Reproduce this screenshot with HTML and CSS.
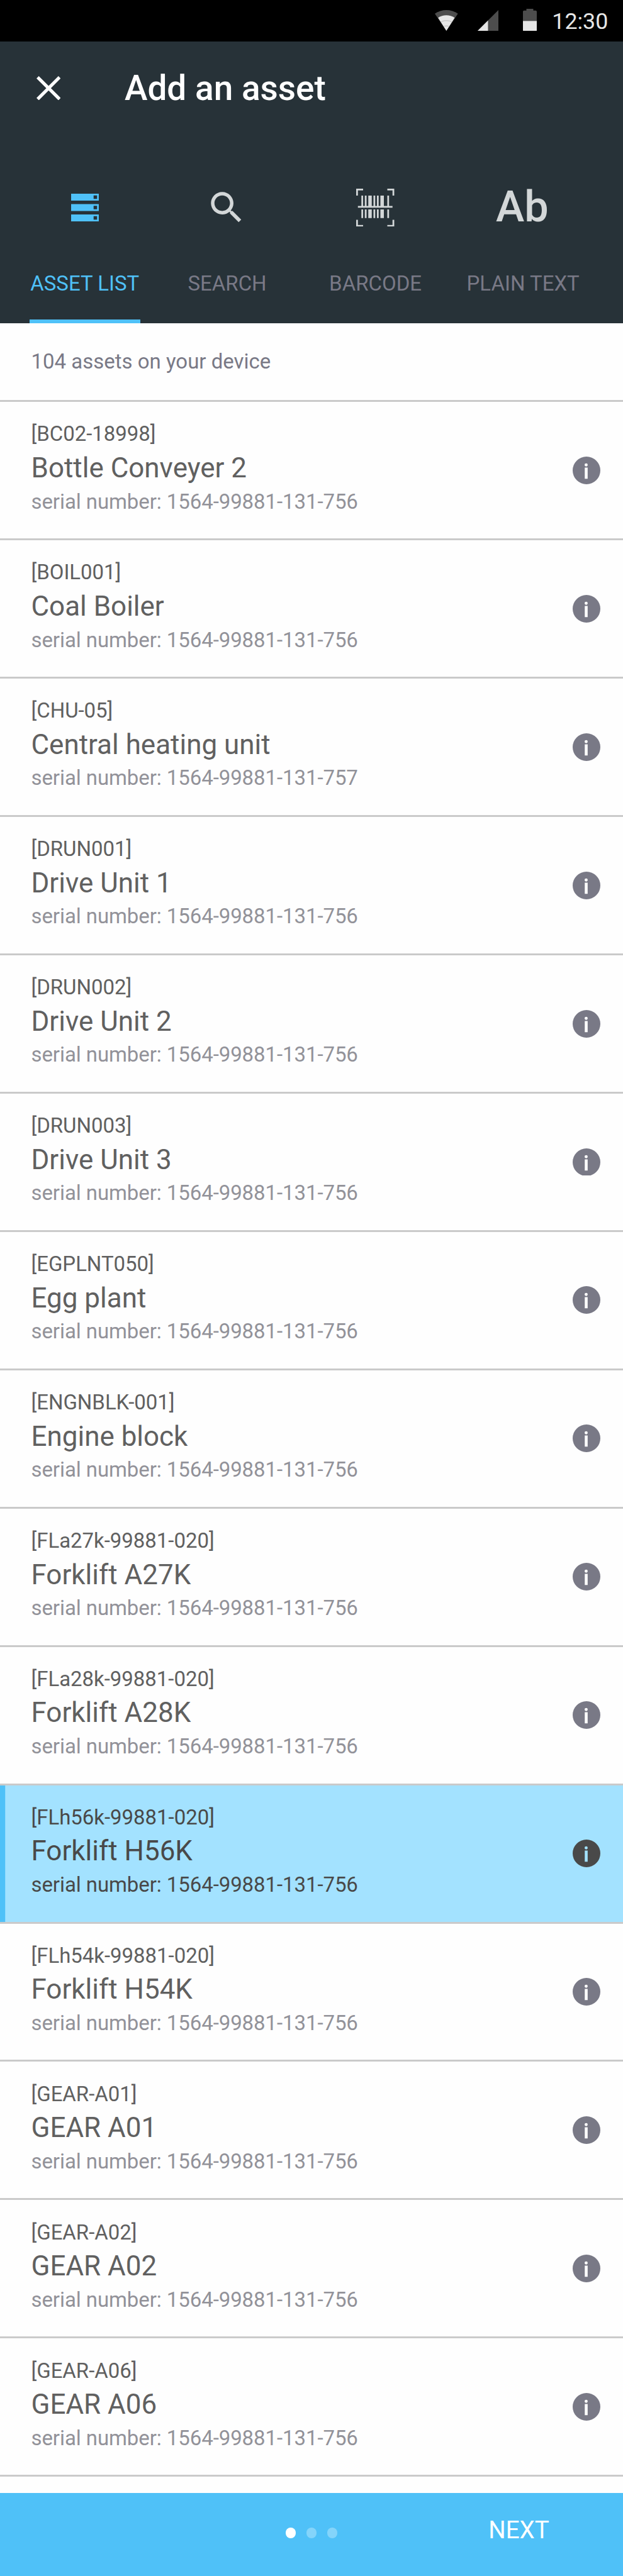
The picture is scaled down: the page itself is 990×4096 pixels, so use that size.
FILE: index.html
```html
<!DOCTYPE html>
<html lang="en">
<head>
<meta charset="utf-8">
<title>Add an asset</title>
<link rel="stylesheet" href="styles.css">
</head>
<body>
<svg class="sprite" aria-hidden="true">
  <symbol id="info" viewBox="0 0 48 48">
    <path fill="currentColor" fill-rule="evenodd" d="M24 0A24 24 0 1 1 24 48A24 24 0 1 1 24 0ZM23.400 11.700A2.700 2.700 0 1 0 23.400 17.100A2.700 2.700 0 1 0 23.400 11.700ZM21 19V38.500H26V19Z"/>
  </symbol>
</svg>
<div class="screen">
  <div class="status">
    <svg class="wifi" viewBox="0 0 40 36"><path d="M0 6.3C12-2.1 28-2.1 40 6.3L20 36Z" fill="#4d4d4d"/><path d="M5.6 13.3C14 7.6 26 7.6 34.4 13.3L20 36Z" fill="#e6e6e6"/><path d="M11 20.500Q14 18.500 17 18.500H23Q26 18.500 29 20.500M15.500 28.500Q17 27.500 20 27.500T24.500 28.500" fill="none" stroke="#b0b0b0" stroke-width=".9"/></svg>
    <svg class="signal" viewBox="0 0 36 36"><path d="M0 36L36 0V36Z" fill="#4d4d4d"/><path d="M0 36L18 18V36Z" fill="#e6e6e6"/></svg>
    <svg class="battery" viewBox="0 0 24 39"><path d="M6 0H18V3H22Q24 3 24 5V21H0V5Q0 3 2 3H6Z" fill="#4d4d4d"/><path d="M0 21H24V37Q24 39 22 39H2Q0 39 0 37Z" fill="#e6e6e6"/></svg>
    <span class="clock">12:30</span>
  </div>
  <header class="header">
    <div class="appbar">
      <svg class="close" viewBox="0 0 42 42"><path d="M2 2L40 40M40 2L2 40" stroke="#fff" stroke-width="5.600"/></svg>
      <h1 class="heading">Add an asset</h1>
    </div>
    <nav class="tabs">
      <a class="tab active">
        <span class="tab-icon"><svg class="i-list" viewBox="0 0 48 48"><path fill="#4fc1f8" fill-rule="evenodd" d="M0 0H48V12H0ZM39 3V9H45V3ZM0 18H48V30H0ZM39 21V27H45V21ZM0 36H48V48H0ZM39 39V45H45V39Z"/></svg></span>
        <span class="tab-label">ASSET LIST</span>
      </a>
      <a class="tab">
        <span class="tab-icon"><svg class="i-search" viewBox="0 0 24 24"><path fill="#d3d7d8" d="M15.500 14h-.79l-.28-.27C15.410 12.590 16 11.110 16 9.500 16 5.910 13.090 3 9.500 3S3 5.910 3 9.500 5.910 16 9.500 16c1.610 0 3.090-.59 4.230-1.570l.27.28v.79l5 4.990L20.490 19l-4.990-5zm-6 0C7.010 14 5 11.990 5 9.500S7.010 5 9.500 5 14 7.010 14 9.500 11.990 14 9.500 14z"/></svg></span>
        <span class="tab-label">SEARCH</span>
      </a>
      <a class="tab">
        <span class="tab-icon"><svg class="i-barcode" viewBox="0 0 66 66"><path fill="#d3d7d8" d="M0 0H12V3H3V12H0ZM54 0H66V12H63V3H54ZM0 54H3V63H12V66H0ZM63 54H66V66H54V63H63ZM3 30H63V33H3ZM9 12H12V30H9ZM15 12H18V30H15ZM21 12H27V30H21ZM30 12H33V30H30ZM36 12H39V30H36ZM42 12H48V30H42ZM54 12H57V30H54ZM9 36H12V51H9ZM15 36H18V51H15ZM21 36H27V51H21ZM30 36H33V51H30ZM36 36H39V51H36ZM42 36H48V51H42ZM54 36H57V51H54Z"/></svg></span>
        <span class="tab-label">BARCODE</span>
      </a>
      <a class="tab">
        <span class="tab-icon tab-ab">Ab</span>
        <span class="tab-label">PLAIN TEXT</span>
      </a>
    </nav>
  </header>
  <p class="count">104 assets on your device</p>
  <ul class="list">
    <li class="row"><div><p class="code">[BC02-18998]</p><p class="name">Bottle Conveyer 2</p><p class="serial">serial number: 1564-99881-131-756</p></div><svg class="info"><use href="#info"/></svg></li>
    <li class="row"><div><p class="code">[BOIL001]</p><p class="name">Coal Boiler</p><p class="serial">serial number: 1564-99881-131-756</p></div><svg class="info"><use href="#info"/></svg></li>
    <li class="row"><div><p class="code">[CHU-05]</p><p class="name">Central heating unit</p><p class="serial">serial number: 1564-99881-131-757</p></div><svg class="info"><use href="#info"/></svg></li>
    <li class="row"><div><p class="code">[DRUN001]</p><p class="name">Drive Unit 1</p><p class="serial">serial number: 1564-99881-131-756</p></div><svg class="info"><use href="#info"/></svg></li>
    <li class="row"><div><p class="code">[DRUN002]</p><p class="name">Drive Unit 2</p><p class="serial">serial number: 1564-99881-131-756</p></div><svg class="info"><use href="#info"/></svg></li>
    <li class="row"><div><p class="code">[DRUN003]</p><p class="name">Drive Unit 3</p><p class="serial">serial number: 1564-99881-131-756</p></div><svg class="info"><use href="#info"/></svg></li>
    <li class="row"><div><p class="code">[EGPLNT050]</p><p class="name">Egg plant</p><p class="serial">serial number: 1564-99881-131-756</p></div><svg class="info"><use href="#info"/></svg></li>
    <li class="row"><div><p class="code">[ENGNBLK-001]</p><p class="name">Engine block</p><p class="serial">serial number: 1564-99881-131-756</p></div><svg class="info"><use href="#info"/></svg></li>
    <li class="row"><div><p class="code">[FLa27k-99881-020]</p><p class="name">Forklift A27K</p><p class="serial">serial number: 1564-99881-131-756</p></div><svg class="info"><use href="#info"/></svg></li>
    <li class="row"><div><p class="code">[FLa28k-99881-020]</p><p class="name">Forklift A28K</p><p class="serial">serial number: 1564-99881-131-756</p></div><svg class="info"><use href="#info"/></svg></li>
    <li class="row selected"><div><p class="code">[FLh56k-99881-020]</p><p class="name">Forklift H56K</p><p class="serial">serial number: 1564-99881-131-756</p></div><svg class="info"><use href="#info"/></svg></li>
    <li class="row"><div><p class="code">[FLh54k-99881-020]</p><p class="name">Forklift H54K</p><p class="serial">serial number: 1564-99881-131-756</p></div><svg class="info"><use href="#info"/></svg></li>
    <li class="row"><div><p class="code">[GEAR-A01]</p><p class="name">GEAR A01</p><p class="serial">serial number: 1564-99881-131-756</p></div><svg class="info"><use href="#info"/></svg></li>
    <li class="row"><div><p class="code">[GEAR-A02]</p><p class="name">GEAR A02</p><p class="serial">serial number: 1564-99881-131-756</p></div><svg class="info"><use href="#info"/></svg></li>
    <li class="row"><div><p class="code">[GEAR-A06]</p><p class="name">GEAR A06</p><p class="serial">serial number: 1564-99881-131-756</p></div><svg class="info"><use href="#info"/></svg></li>
  </ul>
  <footer class="footer">
    <div class="dots"><i class="dot on"></i><i class="dot"></i><i class="dot"></i></div>
    <a class="next">NEXT</a>
  </footer>
</div>
</body>
</html>
```
FILE: styles.css
```css
* { box-sizing: border-box; margin: 0; padding: 0; }
/* 1rem is ten design units */
html { font-size: 9.1645px; }
body { background: #fefefe; font-family: Roboto, "Liberation Sans", sans-serif; overflow: hidden; }
.sprite { display: none; }
svg { display: block; flex: none; }
.screen { width: 100%; height: 4096px; display: flex; flex-direction: column; }

.status { flex: none; height: 7.2rem; background: #000; display: flex; justify-content: flex-end; padding-right: 2.4rem; }
.wifi { width: 4rem; height: 3.6rem; margin: 1.8rem 3.4rem 0 0; }
.signal { width: 3.6rem; height: 3.6rem; margin: 1.8rem 4.2rem 0 0; }
.battery { width: 2.4rem; height: 3.9rem; margin: 1.5rem 2.7rem 0 0; }
.clock { width: 9.9rem; color: #e6e6e6; font-size: 3.9rem; line-height: 5rem; padding-top: 1.3rem; }

.header { flex: none; height: 48.9rem; background: #273238; }
.appbar { height: 16.2rem; display: flex; align-items: center; padding-left: 6.3rem; }
.close { width: 4.2rem; height: 4.2rem; }
.heading { margin-left: 11.1rem; padding-top: .2rem; color: #fff; font-size: 6rem; line-height: 7.2rem; font-weight: 500; }
.tabs { height: 32.7rem; padding-left: 1.2rem; display: grid; grid-template-columns: 27rem 22.4rem 29rem 22.2rem; justify-items: center; }
.tab { display: flex; flex-direction: column; align-items: center; padding: 8.7rem .3rem 0; color: #797986; }
.tab.active { width: 19.2rem; color: #4fc1f8; border-bottom: .66rem solid #4fc1f8; }
.tab-icon { height: 7.8rem; display: flex; align-items: center; justify-content: center; }
.tab-label { margin-top: 7.1rem; font-size: 3.6rem; line-height: 4.4rem; white-space: nowrap; }
.tab-ab { color: #d3d7d8; font-size: 7.45rem; font-weight: 500; line-height: 7.8rem; margin-right: .3rem; }
.i-list { width: 4.8rem; height: 4.8rem; }
.i-search { width: 7.2rem; height: 7.2rem; margin-right: .2rem; }
.i-barcode { width: 6.6rem; height: 6.6rem; }

.count { flex: none; height: 13.65rem; padding: 4.42rem 5.4rem 0; border-bottom: 3px solid #cacaca; color: #797986; font-size: 3.6rem; line-height: 4.4rem; }
.list { flex: none; list-style: none; }
.row { height: 24rem; padding: 3.4rem 3.9rem 0 5.4rem; border-bottom: 3px solid #cacaca; display: flex; justify-content: space-between; color: #606060; white-space: nowrap; }
.code { font-size: 3.6rem; line-height: 4.4rem; letter-spacing: -.03px; }
.name { margin-top: .69rem; font-size: 4.8rem; line-height: 6rem; }
.serial { margin-top: .61rem; font-size: 3.6rem; line-height: 4.4rem; letter-spacing: -.08px; color: #929299; }
.info { width: 4.8rem; height: 4.8rem; margin-top: 6.05rem; color: #797986; }
.selected, .selected .serial, .selected .info { color: #494949; }
.selected { background: #a3e2ff; box-shadow: inset .9rem 0 #4fc1f8; }

.footer { margin-top: auto; height: 14.4rem; background: #4fc1f8; display: flex; align-items: flex-start; justify-content: space-between; padding: 0 12.8rem 0 49.5rem; }
.dots { display: flex; gap: 1.8rem; padding-top: 6rem; }
.dot { width: 1.8rem; height: 1.8rem; border-radius: 50%; background: #84d4fa; }
.dot.on { background: #fff; }
.next { color: #fff; font-size: 4.2rem; line-height: 5rem; padding-top: 3.97rem; }
```
